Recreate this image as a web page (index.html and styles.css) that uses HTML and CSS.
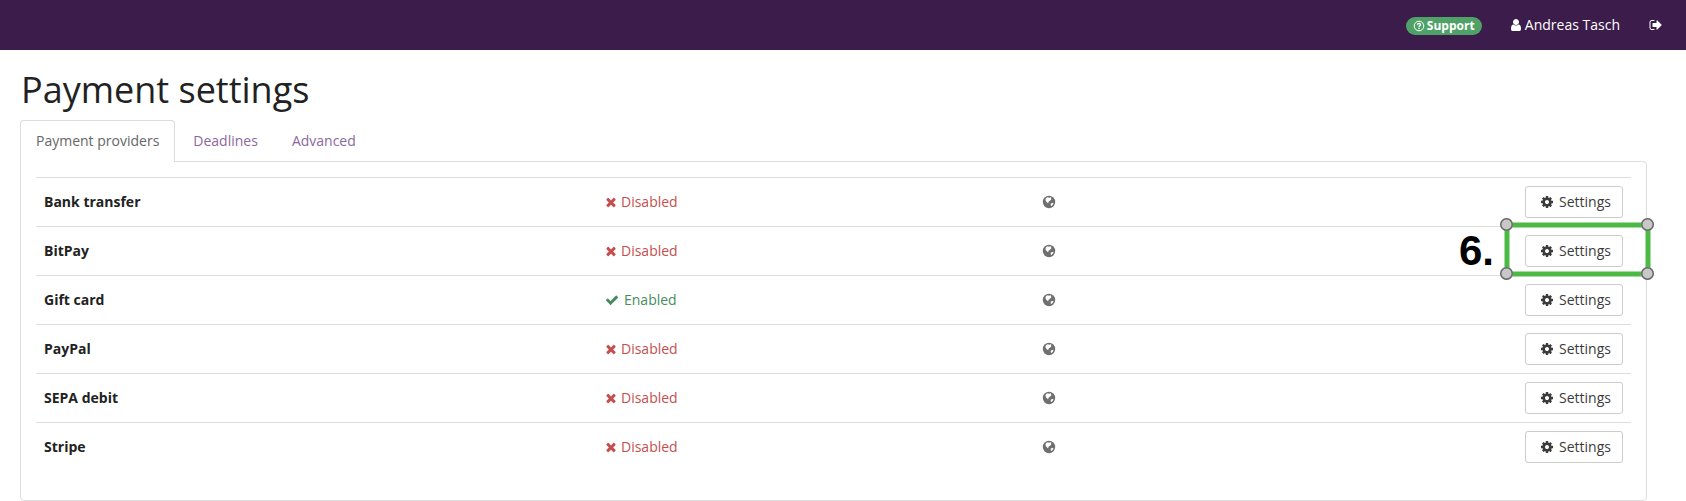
FILE: index.html
```
<!DOCTYPE html>
<html lang="en">
<head>
<meta charset="utf-8">
<title>Payment settings</title>
<link rel="stylesheet" href="styles.css">
</head>
<body>
<svg class="sprite" aria-hidden="true">
  <symbol id="user" viewBox="0 0 1792 1792"><path d="M1536 1399q0 109-62.5 187t-150.5 78h-854q-88 0-150.5-78t-62.5-187q0-85 8.5-160.5t31.5-152 58.5-131 94-89 134.5-34.5q131 128 313 128t313-128q76 0 134.5 34.5t94 89 58.5 131 31.5 152 8.5 160.5zm-256-887q0 159-112.5 271.5t-271.5 112.5-271.5-112.5-112.5-271.5 112.5-271.5 271.5-112.5 271.5 112.5 112.5 271.5z"/></symbol>
  <symbol id="times" viewBox="0 0 1792 1792"><path d="M1490 1322q0 40-28 68l-136 136q-28 28-68 28t-68-28l-294-294-294 294q-28 28-68 28t-68-28l-136-136q-28-28-28-68t28-68l294-294-294-294q-28-28-28-68t28-68l136-136q28-28 68-28t68 28l294 294 294-294q28-28 68-28t68 28l136 136q28 28 28 68t-28 68l-294 294 294 294q28 28 28 68z"/></symbol>
  <symbol id="check" viewBox="0 0 1792 1792"><path d="M1671 566q0 40-28 68l-724 724-136 136q-28 28-68 28t-68-28l-136-136-362-362q-28-28-28-68t28-68l136-136q28-28 68-28t68 28l294 295 656-657q28-28 68-28t68 28l136 136q28 28 28 68z"/></symbol>
  <symbol id="gear" viewBox="0 0 1792 1792"><path d="M1152 896q0-106-75-181t-181-75-181 75-75 181 75 181 181 75 181-75 75-181zm512-109v222q0 12-8 23t-20 13l-185 28q-19 54-39 91 35 50 107 138 10 12 10 25t-9 23q-27 37-99 108t-94 71q-12 0-26-9l-138-108q-44 23-91 38-16 136-29 186-7 28-36 28h-222q-14 0-24.5-8.5t-11.5-21.5l-28-184q-49-16-90-37l-141 107q-10 9-25 9-14 0-25-11-126-114-165-168-7-10-7-23 0-12 8-23 15-21 51-66.5t54-70.5q-27-50-41-99l-183-27q-13-2-21-12.5t-8-23.5v-222q0-12 8-23t19-13l186-28q14-46 39-92-40-57-107-138-10-12-10-24 0-10 9-23 26-36 98.5-107.5t94.5-71.5q13 0 26 10l138 107q44-23 91-38 16-136 29-186 7-28 36-28h222q14 0 24.5 8.5t11.5 21.5l28 184q49 16 90 37l142-107q9-9 24-9 13 0 25 10 129 119 165 170 7 8 7 22 0 12-8 23-15 21-51 66.5t-54 70.5q26 50 41 98l183 28q13 2 21 12.5t8 23.5z"/></symbol>
  <symbol id="signout" viewBox="0 0 1792 1792"><path d="M704 1440q0 4 1 20t.5 26.5-3 23.5-10 19.5-20.5 6.5h-320q-119 0-203.5-84.5t-84.5-203.5v-704q0-119 84.5-203.5t203.5-84.5h320q13 0 22.5 9.5t9.5 22.5q0 4 1 20t.5 26.5-3 23.5-10 19.5-20.5 6.5h-320q-66 0-113 47t-47 113v704q0 66 47 113t113 47h312l11.500 1 11.500 3 8 5.500 7 9 2 13.500zm928-544q0 26-19 45l-544 544q-19 19-45 19t-45-19-19-45v-288h-448q-26 0-45-19t-19-45v-384q0-26 19-45t45-19h448v-288q0-26 19-45t45-19 45 19l544 544q19 19 19 45z"/></symbol>
  <symbol id="help" viewBox="0 0 12 12"><circle cx="6" cy="6" r="4.800" fill="none" stroke="currentColor" stroke-width="1"/><path d="M4.300 4.700C4.500 3.100 7.600 3.100 7.600 4.800C7.600 5.800 6 5.700 6 7" fill="none" stroke="currentColor" stroke-width="1.300"/><path d="M5.300 7.700h1.400v1.300h-1.400z"/></symbol>
  <symbol id="globe" viewBox="0 0 14 14"><circle cx="7" cy="7" r="6.200"/><path d="M4.100 2.900L5.800 2.300L7.100 2.800L8.400 2.200L9.400 3L8.900 4.100L9.400 4.700L8.100 5.500L7 6.500L6.200 7L6.500 7.900L6 8.200L4.900 7.300L3.900 6.300L3.500 5.100L3.600 3.900zM9.500 8.200L11.300 7.800L11.400 8.600L10.600 10L9.300 11L8.800 10.400L8.900 9.700L8.400 9z" fill="#fff"/></symbol>
</svg>

<header class="navbar">
  <a class="support"><svg class="help-icon"><use href="#help"/></svg>Support</a>
  <a class="account"><svg class="icon"><use href="#user"/></svg>Andreas Tasch</a>
  <a class="logout"><svg class="icon"><use href="#signout"/></svg></a>
</header>

<main class="page">
  <h1 class="title">Payment settings</h1>
  <nav class="tabs">
    <a class="tab tab-active">Payment providers</a>
    <a class="tab">Deadlines</a>
    <a class="tab">Advanced</a>
  </nav>
  <section class="panel">
    <div class="row">
      <strong>Bank transfer</strong>
      <span class="status disabled"><svg class="icon"><use href="#times"/></svg>Disabled</span>
      <svg class="icon globe"><use href="#globe"/></svg>
      <a class="button"><svg class="icon"><use href="#gear"/></svg>Settings</a>
    </div>
    <div class="row">
      <strong>BitPay</strong>
      <span class="status disabled"><svg class="icon"><use href="#times"/></svg>Disabled</span>
      <svg class="icon globe"><use href="#globe"/></svg>
      <a class="button"><svg class="icon"><use href="#gear"/></svg>Settings</a>
      <div class="highlight">
        <span class="step">6.</span>
        <i class="handle top left"></i><i class="handle top right"></i>
        <i class="handle bottom left"></i><i class="handle bottom right"></i>
      </div>
    </div>
    <div class="row">
      <strong>Gift card</strong>
      <span class="status enabled"><svg class="icon"><use href="#check"/></svg>Enabled</span>
      <svg class="icon globe"><use href="#globe"/></svg>
      <a class="button"><svg class="icon"><use href="#gear"/></svg>Settings</a>
    </div>
    <div class="row">
      <strong>PayPal</strong>
      <span class="status disabled"><svg class="icon"><use href="#times"/></svg>Disabled</span>
      <svg class="icon globe"><use href="#globe"/></svg>
      <a class="button"><svg class="icon"><use href="#gear"/></svg>Settings</a>
    </div>
    <div class="row">
      <strong>SEPA debit</strong>
      <span class="status disabled"><svg class="icon"><use href="#times"/></svg>Disabled</span>
      <svg class="icon globe"><use href="#globe"/></svg>
      <a class="button"><svg class="icon"><use href="#gear"/></svg>Settings</a>
    </div>
    <div class="row">
      <strong>Stripe</strong>
      <span class="status disabled"><svg class="icon"><use href="#times"/></svg>Disabled</span>
      <svg class="icon globe"><use href="#globe"/></svg>
      <a class="button"><svg class="icon"><use href="#gear"/></svg>Settings</a>
    </div>
  </section>
</main>
</body>
</html>
```
FILE: styles.css
```
* { box-sizing: border-box; }
body {
  margin: 0;
  background: #fff;
  color: #222;
  font: 14px/20px "Open Sans", "Noto Sans", sans-serif;
}
.sprite { display: none; }
.icon { width: 14px; height: 14px; flex: none; fill: currentColor; }

.navbar {
  display: flex;
  align-items: center;
  justify-content: flex-end;
  height: 50px;
  padding-right: 23px;
  background: #3b1c4a;
  color: #fff;
}
.support {
  display: flex;
  align-items: center;
  gap: 2px;
  width: 76px;
  height: 18px;
  margin-top: 1px;
  padding-left: 7px;
  border-radius: 9px;
  background: #50a167;
  font-size: 12px;
  font-weight: 700;
}
.help-icon { width: 12px; height: 12px; flex: none; fill: currentColor; }
.account { display: flex; align-items: center; gap: 2px; margin-left: 28px; }
.account .icon { margin-left: -1px; }
.logout { display: flex; margin-left: 29px; }

.page { padding: 20px 39px 0 20px; }
.title { margin: 0 0 10px; padding-left: 1px; font-size: 36px; font-weight: 400; line-height: 40px; }
.tabs { display: flex; height: 42px; }
.tab { padding: 10px 15px 0; margin-right: 2px; border: 1px solid transparent; color: #8b68a0; }
.tab-active {
  border-color: #ddd;
  border-bottom: 0;
  border-radius: 4px 4px 0 0;
  background: #fff;
  color: #666;
  z-index: 1;
}
.panel {
  height: 340px;
  margin-top: -1px;
  padding: 15px;
  border: 1px solid #ddd;
  border-radius: 0 4px 4px 4px;
}
.row {
  position: relative;
  display: grid;
  grid-template-columns: 561px 437px 1fr auto;
  align-items: center;
  height: 49px;
  padding: 0 8px;
  border-top: 1px solid #ddd;
}
.status { display: flex; align-items: center; gap: 3px; }
.disabled { color: #c44f4f; }
.disabled .icon { margin-left: -1px; }
.enabled { color: #468c5e; }
.enabled .icon { margin-right: 2px; }
.globe { color: #6f6f6f; }
.button {
  display: flex;
  align-items: center;
  justify-content: center;
  gap: 5px;
  width: 98px;
  height: 32px;
  padding-left: 3px;
  border: 1px solid #ccc;
  border-radius: 3px;
  background: #fff;
  color: #3b3b3b;
}

/* Annotation laid over the BitPay settings button */
.highlight {
  position: absolute;
  z-index: 1;
  top: -4px;
  right: -19px;
  width: 145px;
  height: 53px;
  border: 4px solid #4bb944;
  box-shadow: 0 0 0 1px #a5dca1, inset 0 0 0 1px #a5dca1;
}
.handle {
  position: absolute;
  width: 13px;
  height: 13px;
  border-radius: 50%;
  background: #c8c8c8;
  box-shadow: inset 0 0 0 1.5px #666;
}
.top { top: -9px; }
.bottom { bottom: -8px; }
.left { left: -9px; }
.right { right: -8px; }
.step {
  position: absolute;
  top: 3px;
  left: -50px;
  color: #000;
  font: 700 42px/42px "Liberation Sans", Arial, sans-serif;
}
```
